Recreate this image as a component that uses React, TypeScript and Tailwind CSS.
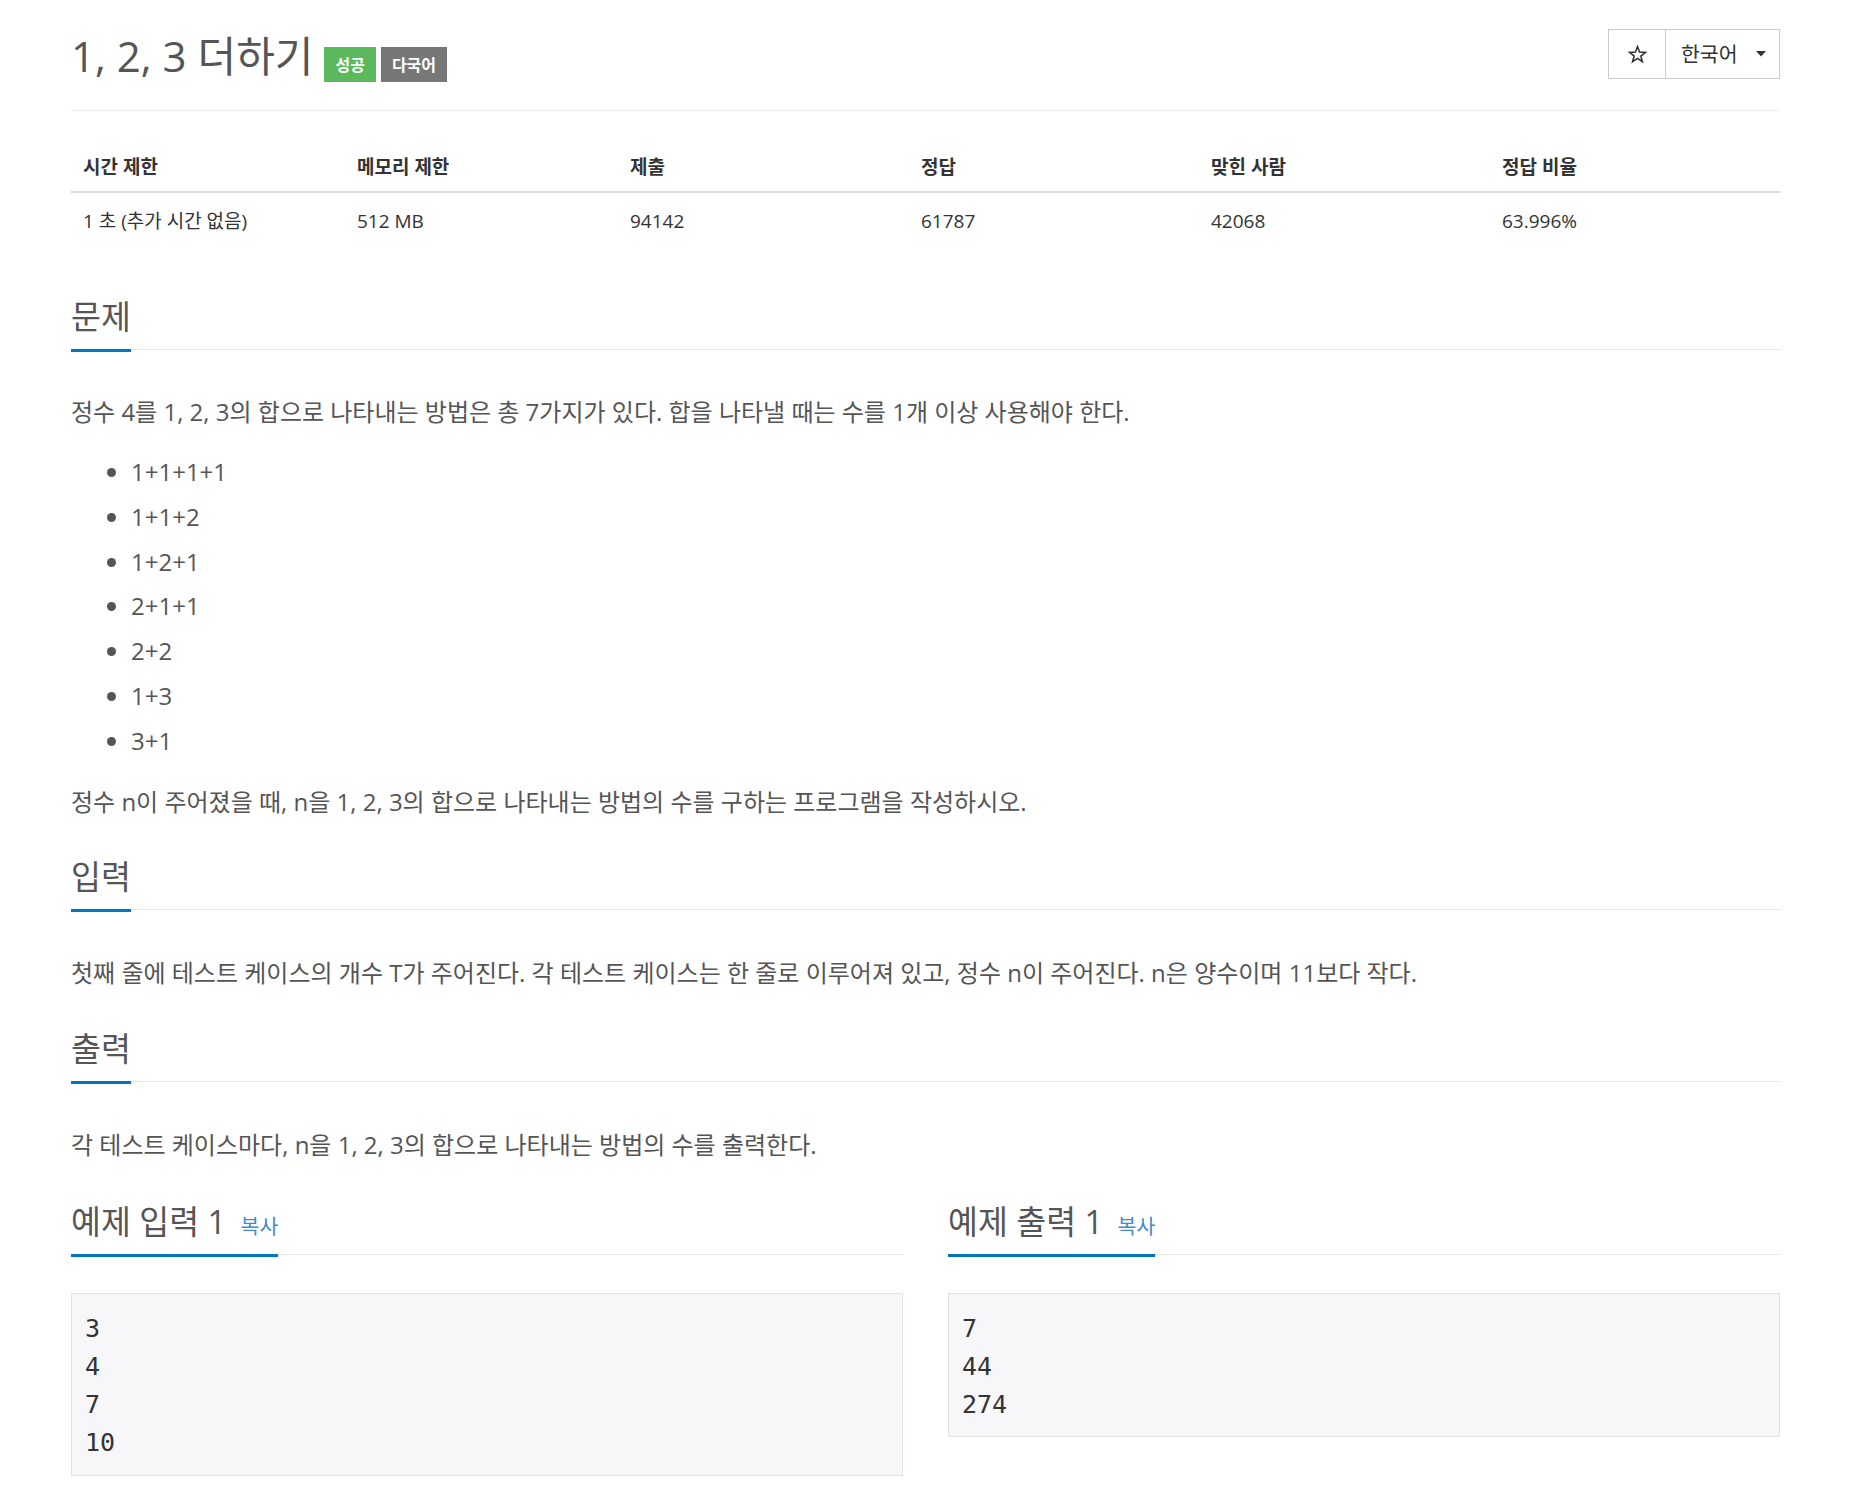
import React from "react";

const FONT = "font-['Open_Sans','Noto_Sans_CJK_KR',sans-serif]";

function Headline({ children, className = "" }: { children: React.ReactNode; className?: string }) {
  return (
    <div className={`border-b border-dotted border-[#d5d5d5] ${className}`}>
      <h2 className="inline-block text-[32.5px] leading-[33px] pb-[16px] border-b-[3px] border-[#0076c0] mb-[-3px] text-[#555] font-normal">
        {children}
      </h2>
    </div>
  );
}

function StarIcon() {
  const pts: string[] = [];
  for (let i = 0; i < 10; i++) {
    const r = i % 2 === 0 ? 9.5 : 4;
    const a = (Math.PI / 5) * i - Math.PI / 2;
    pts.push(`${(12 + r * Math.cos(a)).toFixed(2)},${(12.5 + r * Math.sin(a)).toFixed(2)}`);
  }
  return (
    <svg width="21" height="21" viewBox="0 0 24 24">
      <polygon points={pts.join(" ")} fill="none" stroke="#333" strokeWidth="1.8" strokeLinejoin="miter" />
    </svg>
  );
}

export default function App() {
  const stats = [
    ["시간 제한", "1 초 (추가 시간 없음)"],
    ["메모리 제한", "512 MB"],
    ["제출", "94142"],
    ["정답", "61787"],
    ["맞힌 사람", "42068"],
    ["정답 비율", "63.996%"],
  ];
  const items = ["1+1+1+1", "1+1+2", "1+2+1", "2+1+1", "2+2", "1+3", "3+1"];

  return (
    <div className={`${FONT} bg-white px-[71px] text-[#555]`}>
      {/* header */}
      <div className="flex items-start justify-between h-[111px] border-b border-[#eee]">
        <div className="flex items-start">
          <h1 className="mt-[35px] text-[42px] leading-[42px] text-[#555] font-normal">1, 2, 3 더하기</h1>
          <span className="ml-[11px] mt-[47px] h-[35px] px-[11px] bg-[#5cb85c] text-white text-[16px] font-bold flex items-center">
            성공
          </span>
          <span className="ml-[5px] mt-[47px] h-[35px] px-[11px] bg-[#777] text-white text-[16px] font-bold flex items-center">
            다국어
          </span>
        </div>
        <div className="mt-[29px] flex h-[50px] border border-[#ccc] text-[#333]">
          <div className="w-[57px] flex items-center justify-center border-r border-[#ccc]">
            <StarIcon />
          </div>
          <div className="w-[113px] flex items-center pl-[15px] text-[20.5px]">
            <span>한국어</span>
            <svg className="ml-[18px]" width="10" height="6" viewBox="0 0 10 6">
              <polygon points="0,0 10,0 5,5.5" fill="#333" />
            </svg>
          </div>
        </div>
      </div>

      {/* stats table */}
      <div className="mt-[33px] grid grid-cols-[274px_273px_291px_290px_291px_1fr] text-[19px] text-[#333]">
        {stats.map(([h]) => (
          <div key={h} className="h-[49px] flex items-center px-[12px] font-bold border-b-2 border-[#ddd]">
            {h}
          </div>
        ))}
        {stats.map(([h, v]) => (
          <div key={h + "v"} className="h-[56px] flex items-center px-[12px]">
            {v}
          </div>
        ))}
      </div>

      {/* 문제 */}
      <Headline className="mt-[51px]">문제</Headline>
      <div className="mt-[43px] text-[24px] text-[#555]">
        <p className="leading-[38px]">
          정수 4를 1, 2, 3의 합으로 나타내는 방법은 총 7가지가 있다. 합을 나타낼 때는 수를 1개 이상 사용해야 한다.
        </p>
        <ul className="mt-[19px] pl-[60px] list-disc">
          {items.map((it) => (
            <li key={it} className="leading-[44.8px]">
              {it}
            </li>
          ))}
        </ul>
        <p className="mt-[19px] leading-[38px]">
          정수 n이 주어졌을 때, n을 1, 2, 3의 합으로 나타내는 방법의 수를 구하는 프로그램을 작성하시오.
        </p>
      </div>

      {/* 입력 */}
      <Headline className="mt-[39px]">입력</Headline>
      <p className="mt-[44px] text-[24px] leading-[38px] text-[#555]">
        첫째 줄에 테스트 케이스의 개수 T가 주어진다. 각 테스트 케이스는 한 줄로 이루어져 있고, 정수 n이 주어진다. n은 양수이며 11보다 작다.
      </p>

      {/* 출력 */}
      <Headline className="mt-[40px]">출력</Headline>
      <p className="mt-[44px] text-[24px] leading-[38px] text-[#555]">
        각 테스트 케이스마다, n을 1, 2, 3의 합으로 나타내는 방법의 수를 출력한다.
      </p>

      {/* 예제 */}
      <div className="mt-[41px] grid grid-cols-2 gap-[45px] items-start">
        <div>
          <Headline>
            예제 입력 1 <a className="ml-[6px] text-[20.5px] leading-none text-[#428bca]">복사</a>
          </Headline>
          <pre className="mt-[38px] bg-[#f7f7f9] border border-[#e1e1e8] px-[13px] pt-[16px] pb-[12px] font-['DejaVu_Sans_Mono',monospace] text-[25px] leading-[38.25px] text-[#333]">
{`3
4
7
10`}
          </pre>
        </div>
        <div>
          <Headline>
            예제 출력 1 <a className="ml-[6px] text-[20.5px] leading-none text-[#428bca]">복사</a>
          </Headline>
          <pre className="mt-[38px] bg-[#f7f7f9] border border-[#e1e1e8] px-[13px] pt-[16px] pb-[12px] font-['DejaVu_Sans_Mono',monospace] text-[25px] leading-[38.25px] text-[#333]">
{`7
44
274`}
          </pre>
        </div>
      </div>
    </div>
  );
}
